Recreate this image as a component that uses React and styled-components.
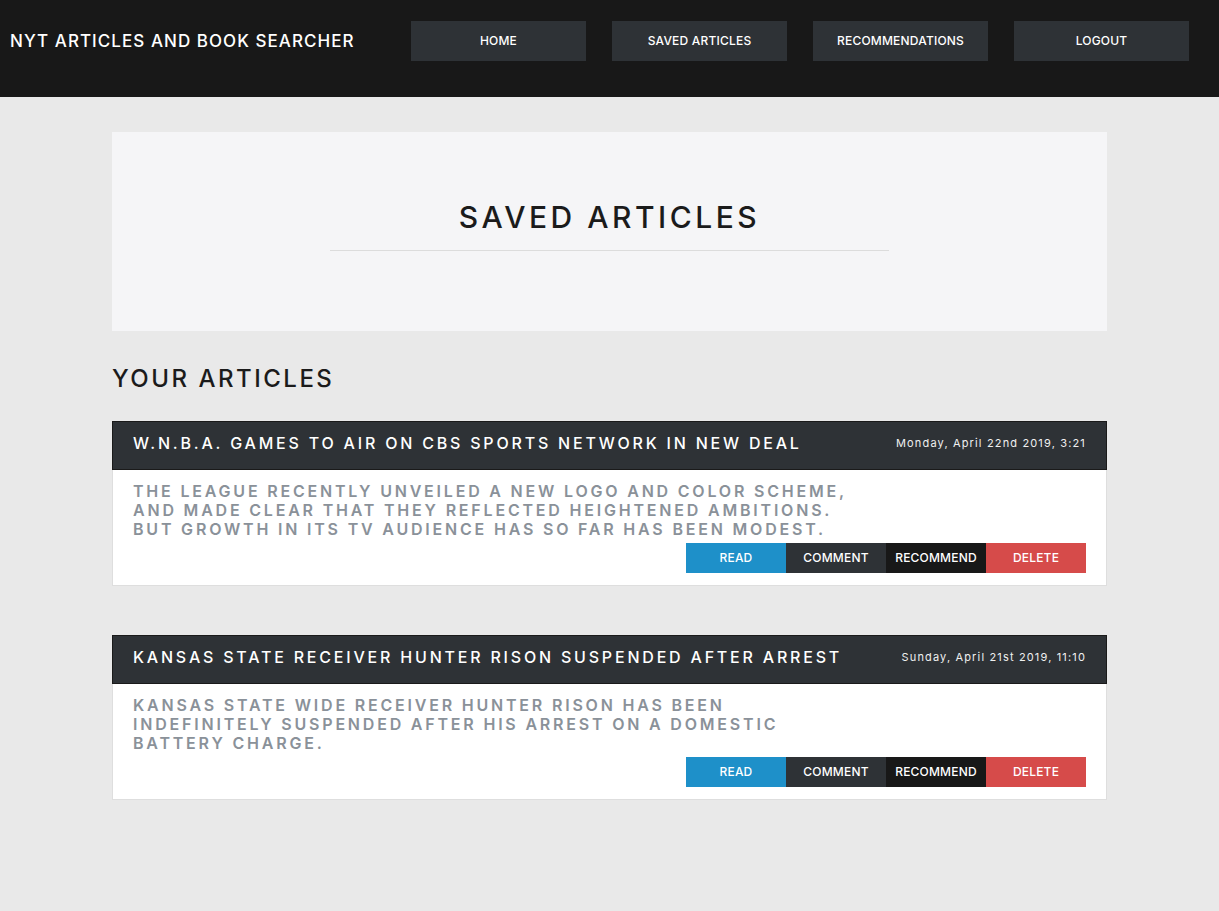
import React from "react";
import styled, { createGlobalStyle } from "styled-components";

const Global = createGlobalStyle`
  html, body { margin: 0; padding: 0; }
  body {
    background: #e9e9e9;
    font-family: Inter, "Noto Sans", "Liberation Sans", sans-serif;
    -webkit-font-smoothing: antialiased;
  }
  * { box-sizing: border-box; }
`;

const Navbar = styled.header`
  height: 97px;
  background: #181818;
  display: flex;
  align-items: flex-start;
  justify-content: space-between;
  padding: 21px 30px 0 10px;
`;

const Brand = styled.div`
  color: #fff;
  font-size: 17px;
  font-weight: 500;
  letter-spacing: 1.05px;
  line-height: 40px;
`;

const NavList = styled.nav`
  display: flex;
  gap: 26px;
`;

const NavButton = styled.button`
  width: 175px;
  height: 40px;
  border: none;
  background: #2e3236;
  color: #fff;
  font-family: inherit;
  font-size: 12px;
  font-weight: 500;
  letter-spacing: 0.2px;
  padding: 0 0 2px;
  cursor: pointer;
`;

const Container = styled.main`
  width: 995px;
  margin: 35px auto 0;
  padding-bottom: 60px;
`;

const Hero = styled.section`
  background: #f5f5f7;
  height: 199px;
  display: flex;
  flex-direction: column;
  align-items: center;
  padding-top: 67px;
`;

const HeroTitle = styled.h1`
  margin: 0;
  font-size: 30px;
  font-weight: 500;
  letter-spacing: 3.5px;
  color: #1b1b1b;
  line-height: 36px;
`;

const HeroRule = styled.hr`
  width: 559px;
  border: none;
  border-top: 1px solid #dcdcdc;
  margin: 15px 0 0;
`;

const SectionTitle = styled.h2`
  margin: 33px 0 27px;
  font-size: 24px;
  font-weight: 500;
  letter-spacing: 2.5px;
  color: #1b1b1b;
  line-height: 30px;
`;

const CardList = styled.div`
  display: flex;
  flex-direction: column;
  gap: 49px;
`;

const Card = styled.article`
  background: #fff;
  border: 1px solid #dedede;
`;

const CardHeader = styled.div`
  height: 49px;
  margin: -1px -1px 0;
  background: #2e3236;
  border: 1px solid #1a1a1a;
  display: flex;
  align-items: center;
  justify-content: space-between;
  padding: 0 20px 5px;
  color: #fff;
`;

const CardTitle = styled.h3`
  margin: 0;
  font-size: 16px;
  font-weight: 500;
  letter-spacing: 2.8px;
`;

const CardDate = styled.span`
  font-size: 11px;
  letter-spacing: 1.15px;
  color: #f0f0f0;
`;

const CardBody = styled.div`
  padding: 12px 20px 12px;
  display: flex;
  flex-direction: column;
`;

const Summary = styled.p`
  margin: 0;
  max-width: 735px;
  font-size: 16px;
  font-weight: 600;
  letter-spacing: 2.8px;
  line-height: 19px;
  color: #8a9199;
  text-transform: uppercase;
`;

const Actions = styled.div`
  display: flex;
  justify-content: flex-end;
  margin-top: 4px;
`;

const colors = {
  read: "#1e90c9",
  comment: "#2e3236",
  recommend: "#181818",
  delete: "#d64b4a",
};

const ActionButton = styled.button`
  width: 100px;
  height: 30px;
  border: none;
  background: ${(p) => colors[p.$variant]};
  color: #fff;
  font-family: inherit;
  font-size: 12px;
  font-weight: 500;
  letter-spacing: 0.2px;
  cursor: pointer;
  padding: 0 0 2px;
`;

const articles = [
  {
    title: "W.N.B.A. GAMES TO AIR ON CBS SPORTS NETWORK IN NEW DEAL",
    date: "Monday, April 22nd 2019, 3:21",
    summary:
      "The league recently unveiled a new logo and color scheme, and made clear that they reflected heightened ambitions. But growth in its TV audience has so far has been modest.",
  },
  {
    title: "KANSAS STATE RECEIVER HUNTER RISON SUSPENDED AFTER ARREST",
    date: "Sunday, April 21st 2019, 11:10",
    summary:
      "Kansas State wide receiver Hunter Rison has been indefinitely suspended after his arrest on a domestic battery charge.",
  },
];

export default function App() {
  return (
    <>
      <Global />
      <Navbar>
        <Brand>NYT ARTICLES AND BOOK SEARCHER</Brand>
        <NavList>
          <NavButton>HOME</NavButton>
          <NavButton>SAVED ARTICLES</NavButton>
          <NavButton>RECOMMENDATIONS</NavButton>
          <NavButton>LOGOUT</NavButton>
        </NavList>
      </Navbar>
      <Container>
        <Hero>
          <HeroTitle>SAVED ARTICLES</HeroTitle>
          <HeroRule />
        </Hero>
        <SectionTitle>YOUR ARTICLES</SectionTitle>
        <CardList>
          {articles.map((a) => (
            <Card key={a.title}>
              <CardHeader>
                <CardTitle>{a.title}</CardTitle>
                <CardDate>{a.date}</CardDate>
              </CardHeader>
              <CardBody>
                <Summary>{a.summary}</Summary>
                <Actions>
                  <ActionButton $variant="read">READ</ActionButton>
                  <ActionButton $variant="comment">COMMENT</ActionButton>
                  <ActionButton $variant="recommend">RECOMMEND</ActionButton>
                  <ActionButton $variant="delete">DELETE</ActionButton>
                </Actions>
              </CardBody>
            </Card>
          ))}
        </CardList>
      </Container>
    </>
  );
}
